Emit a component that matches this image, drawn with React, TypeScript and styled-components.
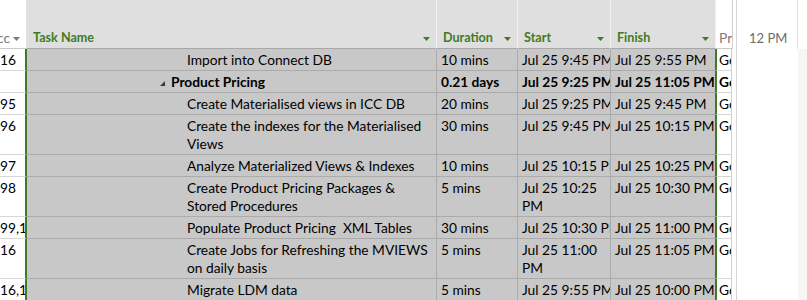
import React from 'react';
import styled, { createGlobalStyle } from 'styled-components';

const GREEN = '#3f7b26';
const SEL_BG = '#c8c8c8';
const SEL_LINE = '#ababab';
const PLAIN_LINE = '#d6d6d6';

const GlobalStyle = createGlobalStyle`
  html, body {
    margin: 0;
    padding: 0;
    background: #ffffff;
  }
  body {
    font-family: Lato, "Liberation Sans", sans-serif;
    font-size: 13.75px;
    color: #000000;
  }
  #root {
    width: 807px;
    height: 300px;
    overflow: hidden;
  }
`;

interface Task {
  succ: string;
  name: string;
  duration: string;
  start: string;
  finish: string;
  resource: string;
  summary?: boolean;
}

const tasks: Task[] = [
  { succ: '1116', name: 'Import into Connect DB', duration: '10 mins', start: 'Jul 25 9:45 PM', finish: 'Jul 25 9:55 PM', resource: 'Go' },
  { succ: '', name: 'Product Pricing', duration: '0.21 days', start: 'Jul 25 9:25 PM', finish: 'Jul 25 11:05 PM', resource: 'Go', summary: true },
  { succ: '1095', name: 'Create Materialised views in ICC DB', duration: '20 mins', start: 'Jul 25 9:25 PM', finish: 'Jul 25 9:45 PM', resource: 'Go' },
  { succ: '1096', name: 'Create the indexes for the Materialised\nViews', duration: '30 mins', start: 'Jul 25 9:45 PM', finish: 'Jul 25 10:15 PM', resource: 'Go' },
  { succ: '1097', name: 'Analyze Materialized Views & Indexes', duration: '10 mins', start: 'Jul 25 10:15 PM', finish: 'Jul 25 10:25 PM', resource: 'Go' },
  { succ: '1098', name: 'Create Product Pricing Packages &\nStored Procedures', duration: '5 mins', start: 'Jul 25 10:25\nPM', finish: 'Jul 25 10:30 PM', resource: 'Go' },
  { succ: '1099,1100', name: 'Populate Product Pricing  XML Tables', duration: '30 mins', start: 'Jul 25 10:30 PM', finish: 'Jul 25 11:00 PM', resource: 'Go' },
  { succ: '1116', name: 'Create Jobs for Refreshing the MVIEWS\non daily basis', duration: '5 mins', start: 'Jul 25 11:00\nPM', finish: 'Jul 25 11:05 PM', resource: 'Go' },
  { succ: '1116,1117', name: 'Migrate LDM data', duration: '5 mins', start: 'Jul 25 9:55 PM', finish: 'Jul 25 10:00 PM', resource: 'Go' },
];

const W = { succ: 27, task: 410, dur: 81, start: 93, finish: 105, res: 17 };

const App = () => {
  return (
    <>
      <GlobalStyle />
      <Screen>
        <Table>
          <HeaderRow>
            <HeaderCell $w={W.succ}>
              <ClippedLabel>Succ</ClippedLabel>
              <Arrow />
            </HeaderCell>
            <HeaderCell $w={W.task} $active>
              <Label>Task Name</Label>
              <Arrow $active />
            </HeaderCell>
            <HeaderCell $w={W.dur} $active>
              <Label>Duration</Label>
              <Arrow $active />
            </HeaderCell>
            <HeaderCell $w={W.start} $active>
              <Label>Start</Label>
              <Arrow $active />
            </HeaderCell>
            <HeaderCell $w={W.finish} $active>
              <Label>Finish</Label>
              <Arrow $active />
            </HeaderCell>
            <HeaderCell $w={W.res} $last>
              <Label>Pre</Label>
            </HeaderCell>
          </HeaderRow>

          {tasks.map((t, i) => (
            <Row key={i}>
              <SuccCell>
                <SuccValue>{t.succ}</SuccValue>
              </SuccCell>
              <Cell $w={W.task} $sel $bold={t.summary} $indent={t.summary ? 133 : 160}>
                {t.summary && (
                  <Collapse viewBox="0 0 5 5">
                    <polygon points="5,0 5,5 0,5" fill="#3a3a3a" />
                  </Collapse>
                )}
                {t.name}
              </Cell>
              <Cell $w={W.dur} $sel $bold={t.summary}>{t.duration}</Cell>
              <Cell $w={W.start} $sel $bold={t.summary}>{t.start}</Cell>
              <Cell $w={W.finish} $sel $bold={t.summary}>{t.finish}</Cell>
              <ResCell $bold={t.summary}>{t.resource}</ResCell>
            </Row>
          ))}
        </Table>

        <Gantt>
          <Slot>
            <SlotHeader>12 PM</SlotHeader>
            <SlotBody />
          </Slot>
          <Slot $shade>
            <SlotHeader />
            <SlotBody $shade />
          </Slot>
        </Gantt>
      </Screen>
    </>
  );
};

const Arrow = ({ $active }: { $active?: boolean }) => (
  <ArrowSvg viewBox="0 0 7 4">
    <polygon points="0,0 7,0 3.5,4" fill={$active ? GREEN : '#7b7b7b'} />
  </ArrowSvg>
);

export default App;

// ───────── Styled Components ─────────

const Screen = styled.div`
  display: flex;
  width: 807px;
  height: 300px;
  overflow: hidden;
  background: #ffffff;
`;

const Table = styled.div`
  display: flex;
  flex-direction: column;
  flex-shrink: 0;
`;

const HeaderRow = styled.div`
  display: flex;
  height: 49px;
`;

const HeaderCell = styled.div<{ $w: number; $active?: boolean; $last?: boolean }>`
  box-sizing: border-box;
  width: ${p => p.$w}px;
  flex-shrink: 0;
  height: 49px;
  display: flex;
  align-items: center;
  padding: 29px ${p => (p.$last ? 0 : 6)}px 1px ${p => (p.$last ? 3 : p.$w < 30 ? 0 : 6)}px;
  background: ${p => (p.$active ? '#dfdfdf' : '#ffffff')};
  border-right: 1px solid ${p => (p.$active ? '#f1f1f1' : p.$last ? '#cfcfcf' : '#e2e2e2')};
  border-bottom: 1px solid ${p => (p.$active ? '#a8a8a8' : '#c9c9c9')};
  color: ${p => (p.$active ? GREEN : '#7a7a7a')};
  font-size: ${p => (p.$active ? '12.6px' : '13.75px')};
  font-weight: ${p => (p.$active ? 700 : 400)};
  overflow: hidden;
  white-space: nowrap;
  line-height: 18px;
`;

const Label = styled.span`
  flex: 1;
  overflow: hidden;
`;

const ClippedLabel = styled.span`
  flex: 1;
  display: flex;
  justify-content: flex-end;
  overflow: hidden;
  padding-right: 3px;
`;

const ArrowSvg = styled.svg`
  width: 7px;
  height: 4px;
  flex-shrink: 0;
  margin-top: 2px;
`;

const Row = styled.div`
  display: flex;
`;

const Cell = styled.div<{ $w: number; $sel?: boolean; $bold?: boolean; $indent?: number }>`
  box-sizing: border-box;
  width: ${p => p.$w}px;
  flex-shrink: 0;
  padding: 2px 0 1px ${p => p.$indent ?? 4}px;
  line-height: 18px;
  white-space: pre;
  overflow: hidden;
  background: ${p => (p.$sel ? SEL_BG : '#ffffff')};
  border-right: 1px solid ${p => (p.$sel ? SEL_LINE : PLAIN_LINE)};
  border-bottom: 1px solid ${p => (p.$sel ? SEL_LINE : PLAIN_LINE)};
  font-weight: ${p => (p.$bold ? 700 : 400)};
`;

const SuccCell = styled.div`
  box-sizing: border-box;
  width: ${W.succ}px;
  flex-shrink: 0;
  padding: 2px 0 1px 0;
  line-height: 18px;
  white-space: nowrap;
  overflow: hidden;
  border-right: 2px solid ${GREEN};
  border-bottom: 1px solid ${PLAIN_LINE};
`;

const SuccValue = styled.span`
  display: inline-block;
  margin-left: -16px;
`;

const ResCell = styled.div<{ $bold?: boolean }>`
  box-sizing: border-box;
  width: ${W.res}px;
  flex-shrink: 0;
  padding: 2px 0 1px 2px;
  line-height: 18px;
  white-space: nowrap;
  overflow: hidden;
  border-left: 2px solid ${GREEN};
  border-right: 1px solid #cfcfcf;
  border-bottom: 1px solid ${PLAIN_LINE};
  font-weight: ${p => (p.$bold ? 700 : 400)};
  margin-left: -1px;
`;

const Collapse = styled.svg`
  width: 5px;
  height: 5px;
  margin-right: 6px;
  vertical-align: 1px;
`;

const Gantt = styled.div`
  flex: 1;
  display: flex;
  margin-left: 3px;
  border-left: 1px solid #d4d4d4;
  height: 300px;
`;

const Slot = styled.div<{ $shade?: boolean }>`
  display: flex;
  flex-direction: column;
  width: ${p => (p.$shade ? 'auto' : '61px')};
  flex: ${p => (p.$shade ? 1 : 'none')};
`;

const SlotHeader = styled.div`
  box-sizing: border-box;
  height: 49px;
  padding: 29px 0 1px 12px;
  line-height: 18px;
  font-size: 13px;
  color: #6b6b6b;
  white-space: nowrap;
  border-right: 1px solid #e4e4e4;
`;

const SlotBody = styled.div<{ $shade?: boolean }>`
  flex: 1;
  background: ${p => (p.$shade ? '#f6f6f6' : '#ffffff')};
`;
